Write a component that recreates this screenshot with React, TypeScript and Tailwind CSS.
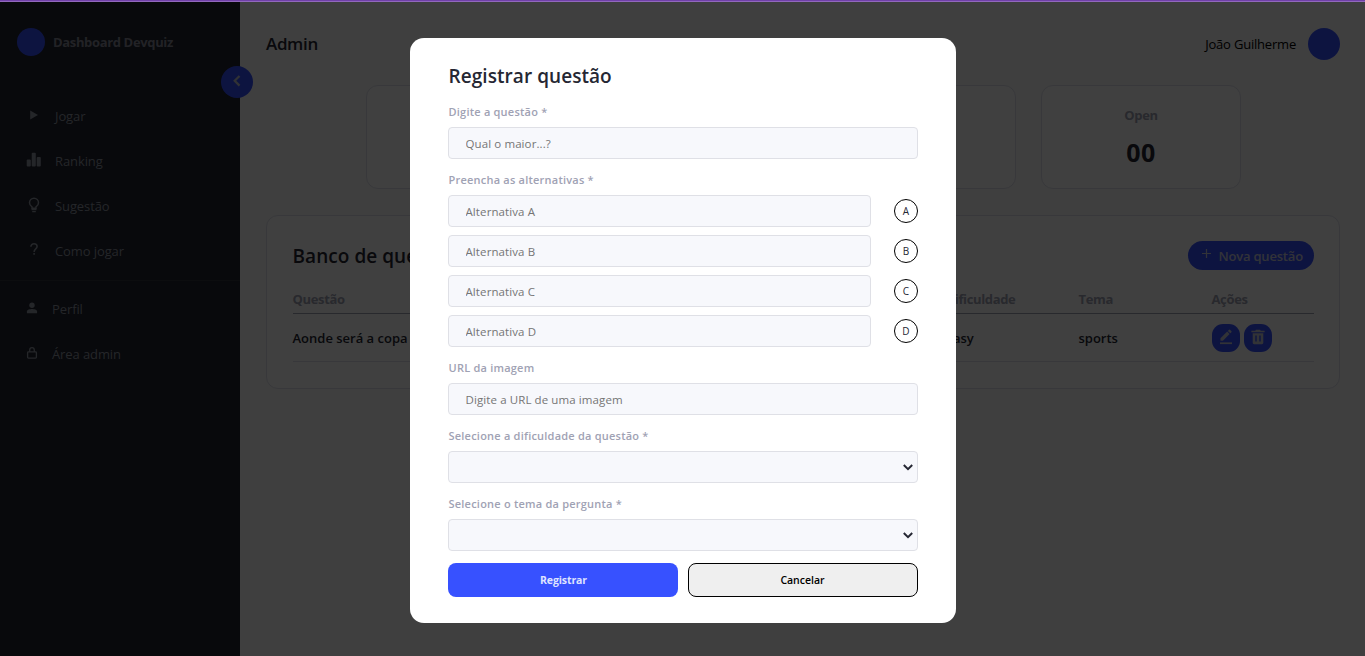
import type { ReactNode } from "react";

type IconProps = { className?: string };

const PlayIcon = ({ className }: IconProps) => (
  <svg className={className} width="16" height="16" viewBox="0 0 16 16" fill="currentColor">
    <path d="M4.200 3.600 12 8 4.200 12.400z" />
  </svg>
);

const StatsIcon = ({ className }: IconProps) => (
  <svg className={className} width="16" height="16" viewBox="0 0 16 16" fill="currentColor">
    <rect x="0.700" y="7.500" width="4.100" height="7" rx="1" />
    <rect x="5.700" y="0.800" width="4.100" height="13.700" rx="1" />
    <rect x="10.700" y="5" width="4.100" height="9.500" rx="1" />
  </svg>
);

const BulbIcon = ({ className }: IconProps) => (
  <svg className={className} width="16" height="16" viewBox="0 0 16 16" fill="none" stroke="currentColor" strokeWidth="1.500">
    <path d="M6 11.300V9.800C4.600 8.900 3.500 7.500 3.500 5.700a4.500 4.500 0 0 1 9 0c0 1.800-1.100 3.200-2.500 4.100v1.500z" />
    <path d="M5.500 12.600h5M6.200 14.600h3.600" strokeWidth="1.300" />
  </svg>
);

const QuestionIcon = ({ className }: IconProps) => (
  <svg className={className} width="16" height="16" viewBox="0 0 16 16" fill="none" stroke="currentColor" strokeWidth="1.600">
    <path d="M4.900 4.700c0-1.800 1.300-2.900 3.100-2.900s3.100 1.100 3.100 2.700c0 2.500-3 2.400-3 5.400" />
    <path d="M8.100 11v1.700" />
  </svg>
);

const PersonIcon = ({ className }: IconProps) => (
  <svg className={className} width="12" height="12" viewBox="0 0 12 12" fill="currentColor">
    <circle cx="6" cy="3.300" r="2.700" />
    <path d="M.9 11.200V9.500C.9 7.700 3.700 7 6 7s5.100.7 5.100 2.500v1.700z" />
  </svg>
);

const LockIcon = ({ className }: IconProps) => (
  <svg className={className} width="12" height="12" viewBox="0 0 12 12" fill="none" stroke="currentColor" strokeWidth="1.300">
    <rect x="1.600" y="4.900" width="8.800" height="6.200" rx="0.800" />
    <path d="M3.700 4.900V3a2.300 2.300 0 0 1 4.600 0v1.900" />
  </svg>
);

const PencilIcon = () => (
  <svg width="14" height="16" viewBox="0 0 14 16" fill="currentColor">
    <path d="M1.500 9.300 8.200 2.600l2.400 2.400-6.700 6.700H1.500zM8.900 1.900l1.100-1.100q.5-.4 1 0l1.400 1.400q.5.500 0 1l-1.100 1.100z" />
    <rect x="1" y="13.400" width="12" height="1.700" />
  </svg>
);

const TrashIcon = () => (
  <svg width="14" height="16" viewBox="0 0 14 16" fill="currentColor">
    <path d="M.4 1.800h3.900l.6-1h4.200l.6 1h3.900v1.500H.4z" />
    <path fillRule="evenodd" d="M1.700 4.200h10.600v9.600q0 1.400-1.400 1.400H3.100q-1.400 0-1.400-1.400zM4.300 6.600v5.800h1.400V6.600zm4 0v5.800h1.400V6.600z" />
  </svg>
);

function NavItem({ icon, label, tight }: { icon: ReactNode; label: string; tight?: boolean }) {
  return (
    <li className={`flex h-[45px] items-center pl-[26px] text-[13px] tracking-[-0.1px] ${tight ? "gap-[14px]" : "gap-[13px]"}`}>
      {icon}
      <span className="pt-px">{label}</span>
    </li>
  );
}

function Sidebar() {
  return (
    <aside className="relative flex w-[240px] shrink-0 flex-col bg-[#202430] pt-[26px] text-[#9096a2]">
      <div className="flex h-7 items-center gap-2 pl-[17px]">
        <span className="size-7 rounded-full bg-[#3751ff]" />
        <span className="pt-[2px] text-[13px] font-bold tracking-[-0.350px] text-[#a4a6b3]/80">Dashboard Devquiz</span>
      </div>
      <button className="absolute top-16 right-[-13px] flex size-8 items-center justify-center rounded-full bg-[#3751ff] text-[#c4c6d0]">
        <svg width="10" height="12" viewBox="0 0 10 12" fill="none" stroke="currentColor" strokeWidth="2.200" className="mr-px mb-0.5">
          <path d="M7.500 1 2.700 5.800l4.800 4.800" />
        </svg>
      </button>
      <ul className="mt-[38px]">
        <NavItem icon={<PlayIcon className="mb-1" />} label="Jogar" />
        <NavItem icon={<StatsIcon className="mb-1" />} label="Ranking" />
        <NavItem icon={<BulbIcon className="mb-1" />} label="Sugestão" />
        <NavItem icon={<QuestionIcon className="mb-1" />} label="Como jogar" />
      </ul>
      <ul className="mt-[6px] border-t border-[#30343e] pt-[6px]">
        <NavItem tight icon={<PersonIcon className="mb-1" />} label="Perfil" />
        <NavItem tight icon={<LockIcon className="mb-1" />} label="Área admin" />
      </ul>
    </aside>
  );
}

const stats = [
  { id: 1 },
  { id: 2 },
  { id: 3 },
  { id: 4, label: "Open", value: "00" },
];

function Dashboard() {
  return (
    <main className="flex min-w-0 flex-1 flex-col pr-[25px] pl-[26px]">
      <header className="flex h-[83px] items-center justify-between">
        <h1 className="pt-px text-[17px] leading-6 font-semibold tracking-[-0.350px] text-[#252733]">Admin</h1>
        <div className="flex items-center gap-3">
          <span className="pt-[2px] text-[13px] tracking-[-0.200px] text-black">João Guilherme</span>
          <span className="size-8 rounded-full bg-[#3751ff]" />
        </div>
      </header>
      <section className="flex justify-center gap-[25px]">
        {stats.map((stat) => (
          <div key={stat.id} className="flex h-[104px] w-[200px] flex-col items-center rounded-xl border border-[#dfe0eb] bg-white pt-[17px]">
            <span className="pl-px text-[13px] leading-6 font-bold tracking-[-0.350px] text-[#9fa2b4]">{stat.label}</span>
            <span className="mt-[7px] pl-px text-[25px] leading-9 font-bold tracking-[0.500px] text-[#252733]">{stat.value}</span>
          </div>
        ))}
      </section>
      <section className="mt-[26px] h-[174px] rounded-xl border border-[#dfe0eb] bg-white px-[25.500px] pt-[25px]">
        <div className="flex h-[29px] items-center justify-between">
          <h2 className="pt-[2px] text-[19px] font-semibold tracking-[0.050px] text-[#252733]">Banco de questões</h2>
          <button className="flex h-[29px] w-[126px] items-center gap-2 rounded-full bg-[#3751ff] pl-[14px] text-[13px] font-semibold tracking-[-0.200px] text-[#c8cbe0]">
            <svg width="9" height="9" viewBox="0 0 9 9" stroke="currentColor" strokeWidth="1.200" className="mb-1 shrink-0">
              <path d="M4.500 0v9M0 4.500h9" />
            </svg>
            <span className="pt-[2px]">Nova questão</span>
          </button>
        </div>
        <div className="mt-[15px] grid h-[29px] grid-cols-[653px_133px_133px_1fr] items-center border-b border-[#9fa2b4] pt-[2px] text-[13px] font-bold tracking-[-0.350px] text-[#9fa2b4]">
          <span>Questão</span>
          <span>Dificuldade</span>
          <span>Tema</span>
          <span>Ações</span>
        </div>
        <div className="grid h-[48px] grid-cols-[653px_133px_133px_1fr] items-center border-b border-[#dfe0eb] text-[13px] font-semibold text-[#252733]">
          <span className="pt-[2px]">Aonde será a copa de 2022?</span>
          <span className="pt-[2px]">easy</span>
          <span className="pt-[2px]">sports</span>
          <span className="flex gap-1 text-[#c8cbd8]">
            <button className="flex size-7 items-center justify-center rounded-[11px] bg-[#3751ff] pb-px"><PencilIcon /></button>
            <button className="flex size-7 items-center justify-center rounded-[11px] bg-[#3751ff] pb-px"><TrashIcon /></button>
          </span>
        </div>
      </section>
    </main>
  );
}

function Label({ className, children }: { className: string; children: ReactNode }) {
  return <label className={`block h-[15px] pl-px text-[11px] font-semibold tracking-[0.220px] whitespace-nowrap text-[#9fa2b4] ${className}`}>{children}</label>;
}

const field = "block h-8 w-full rounded border border-[#dfe0e6] bg-[#f7f8fc] text-[11.500px] text-[#252733]";

function TextField({ placeholder }: { placeholder: string }) {
  return <input className={`${field} px-[17px] tracking-[0.100px] placeholder:text-[#757575]`} placeholder={placeholder} />;
}

function SelectField() {
  return (
    <div className={`${field} flex items-center justify-end pr-1`}>
      <svg width="10" height="7" viewBox="0 0 10 7" fill="none" stroke="currentColor" strokeWidth="2">
        <path d="m.8 1 4.200 4.200L9.200 1" />
      </svg>
    </div>
  );
}

function QuestionModal() {
  return (
    <div className="flex h-[585px] w-[546px] flex-col rounded-[14px] bg-white px-[38px] pt-[26px]">
      <h2 className="h-6 pl-px text-[19px] leading-[25px] font-semibold tracking-[0.060px] text-[#252733]">Registrar questão</h2>
      <Label className="mt-4 mb-2 leading-[15px]">Digite a questão *</Label>
      <TextField placeholder="Qual o maior...?" />
      <Label className="mt-[14px] mb-[7px] leading-[14px]">Preencha as alternativas *</Label>
      <div className="flex flex-col gap-2">
        {["A", "B", "C", "D"].map((letter) => (
          <div key={letter} className="flex items-center justify-between">
            <div className="w-[423px]">
              <TextField placeholder={`Alternativa ${letter}`} />
            </div>
            <span className="flex size-6 items-center justify-center rounded-full border border-black pl-px text-[10px] text-[#252733]">{letter}</span>
          </div>
        ))}
      </div>
      <Label className="mt-[14px] mb-[7px] leading-[14px]">URL da imagem</Label>
      <TextField placeholder="Digite a URL de uma imagem" />
      <Label className="mt-[14px] mb-[7px] leading-[14px]">Selecione a dificuldade da questão *</Label>
      <SelectField />
      <Label className="mt-[14px] mb-[7px] leading-[14px]">Selecione o tema da pergunta *</Label>
      <SelectField />
      <div className="mt-3 grid grid-cols-2 gap-[10px] text-[10.500px]">
        <button className="h-[34px] rounded-lg bg-[#3751ff] pt-[2px] pl-[2px] font-bold tracking-[-0.100px] text-[#dfe3ff]">Registrar</button>
        <button className="h-[34px] rounded-lg border border-black bg-[#efefef] pt-[2px] font-semibold text-black">Cancelar</button>
      </div>
    </div>
  );
}

export default function App() {
  return (
    <div className="relative flex h-[656px] w-[1365px] flex-col overflow-hidden bg-[#fafafa] font-['Open_Sans',sans-serif]">
      <div className="h-0.5 shrink-0" />
      <div className="flex flex-1">
        <Sidebar />
        <Dashboard />
      </div>
      <div className="absolute inset-0 flex items-start justify-center bg-black/75 pt-[38px]">
        <QuestionModal />
      </div>
      <div className="absolute inset-x-0 top-0 h-0.5 border-b border-[#9168bd] bg-[#7040a8]" />
    </div>
  );
}
